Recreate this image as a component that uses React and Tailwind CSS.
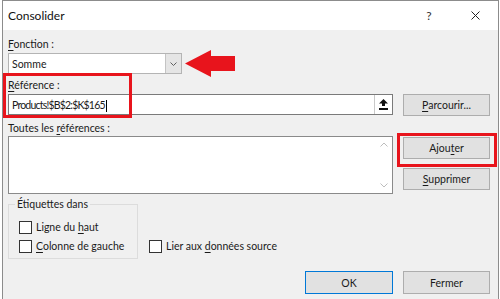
import React from 'react';

const font = { fontFamily: 'Lato, "Noto Sans", "Liberation Sans", sans-serif' };

const U = ({ children }) => <span className="underline underline-offset-2">{children}</span>;

const Btn = ({ children, className = '' }) => (
  <div
    className={`h-[22px] w-[87px] flex items-center justify-center bg-[#e1e1e1] border border-[#adadad] text-[10.5px] text-[#1a1a1a] ${className}`}
  >
    {children}
  </div>
);

const Check = ({ children }) => (
  <div className="flex items-center h-[16px] gap-[4px] text-[10.5px] text-[#1a1a1a] whitespace-nowrap">
    <div className="w-[13px] h-[13px] border border-[#333] bg-white" />
    <span>{children}</span>
  </div>
);

const App = () => {
  return (
    <div className="w-[500px] h-[299px] bg-white overflow-hidden" style={font}>
      <div className="relative ml-[2px] w-[497px] h-[310px] border border-[#8c8c8c] flex flex-col">
        {/* title bar */}
        <div className="h-[29px] bg-white flex items-center pl-[5px] text-[12px] text-[#111]">
          <span className="flex-1">Consolider</span>
          <span className="w-[14px] text-center text-[12px] text-[#333] mr-[35px]">?</span>
          <svg width="9" height="9" viewBox="0 0 9 9" className="mr-[18px]">
            <path d="M0.5 0.5 L8.5 8.5 M8.5 0.5 L0.5 8.5" stroke="#222" strokeWidth="1" />
          </svg>
        </div>

        {/* body */}
        <div className="flex-1 bg-[#f0f0f0] pl-[5px] pt-[6px] text-[10.5px] text-[#1a1a1a] leading-[16px]">
          <div>
            <U>F</U>onction :
          </div>
          <div className="mt-[1px] w-[174px] h-[21px] bg-white border border-[#b4b4b4] flex items-center">
            <span className="flex-1 pl-[3px]">Somme</span>
            <div className="w-[16px] h-full bg-[#e5e5e5] border-l border-[#c4c4c4] flex items-center justify-center">
              <svg width="7" height="4" viewBox="0 0 7 4">
                <path d="M0.5 0.5 L3.5 3.5 L6.5 0.5" stroke="#606060" fill="none" />
              </svg>
            </div>
          </div>

          <div className="mt-[3px]">
            <U>R</U>éférence :
          </div>
          <div className="mt-[1px] flex gap-[10px]">
            <div className="w-[385px] h-[21px] bg-white border border-[#7a7a7a] flex items-center">
              <span className="flex-1 pl-[3px] tracking-[-0.8px]">
                Products!$B$2:$K$165<span className="inline-block w-px h-[12px] bg-black align-middle ml-[1px]" />
              </span>
              <div className="w-[18px] h-full border-l border-[#c9c9c9] flex items-center justify-center">
                <svg width="9" height="11" viewBox="0 0 9 11">
                  <path d="M4.5 0 L9 4.5 L6 4.5 L6 7 L3 7 L3 4.5 L0 4.5 Z" fill="#111" />
                  <rect x="0" y="9" width="9" height="2" fill="#111" />
                </svg>
              </div>
            </div>
            <Btn>
              <span>
                <U>P</U>arcourir...
              </span>
            </Btn>
          </div>

          <div className="mt-[4px]">
            Toutes les <U>r</U>éférences :
          </div>
          <div className="flex gap-[10px]">
            <div className="w-[385px] h-[58px] bg-white border border-[#8a8a8a] flex justify-end">
              <div className="w-[17px] h-full flex flex-col justify-between items-center py-[5px]">
                <svg width="8" height="5" viewBox="0 0 8 5">
                  <path d="M0.5 4.5 L4 1 L7.5 4.5" stroke="#bdbdbd" fill="none" />
                </svg>
                <svg width="8" height="5" viewBox="0 0 8 5">
                  <path d="M0.5 0.5 L4 4 L7.5 0.5" stroke="#bdbdbd" fill="none" />
                </svg>
              </div>
            </div>
            <div className="flex flex-col pt-[1px] gap-[9px]">
              <Btn>
                <span>
                  Ajou<U>t</U>er
                </span>
              </Btn>
              <Btn>
                <span>
                  <U>S</U>upprimer
                </span>
              </Btn>
            </div>
          </div>

          <div className="mt-[2px] flex items-end gap-[11px]">
            <fieldset className="w-[130px] border border-[#dcdcdc] pl-[10px] pb-[4px]">
              <legend className="-ml-[4px] px-[2px]">Étiquettes dans</legend>
              <div className="mt-[7px] flex flex-col gap-[3px]">
                <Check>
                  Ligne du <U>h</U>aut
                </Check>
                <Check>
                  <U>C</U>olonne de gauche
                </Check>
              </div>
            </fieldset>
            <div className="mb-[5px]">
              <Check>
                Lier aux <U>d</U>onnées source
              </Check>
            </div>
          </div>

          <div className="mt-[12px] flex gap-[10px] pl-[297px]">
            <Btn className="!w-[88px] !h-[23px] !border-[#0078d7]">OK</Btn>
            <Btn className="!h-[23px]">Fermer</Btn>
          </div>
        </div>

        {/* red annotations */}
        <svg className="absolute left-[181px] top-[48px]" width="52" height="29" viewBox="0 0 52 29">
          <polygon points="1,14.5 27,1 27,7 51,7 51,22 27,22 27,28" fill="#e8141c" />
        </svg>
        <div className="absolute left-[0px] top-[72px] w-[129px] h-[45px] border-[3px] border-[#e8141c]" />
        <div className="absolute left-[394px] top-[132px] w-[100px] h-[34px] border-[3px] border-[#e8141c]" />
      </div>
    </div>
  );
};

export default App;
